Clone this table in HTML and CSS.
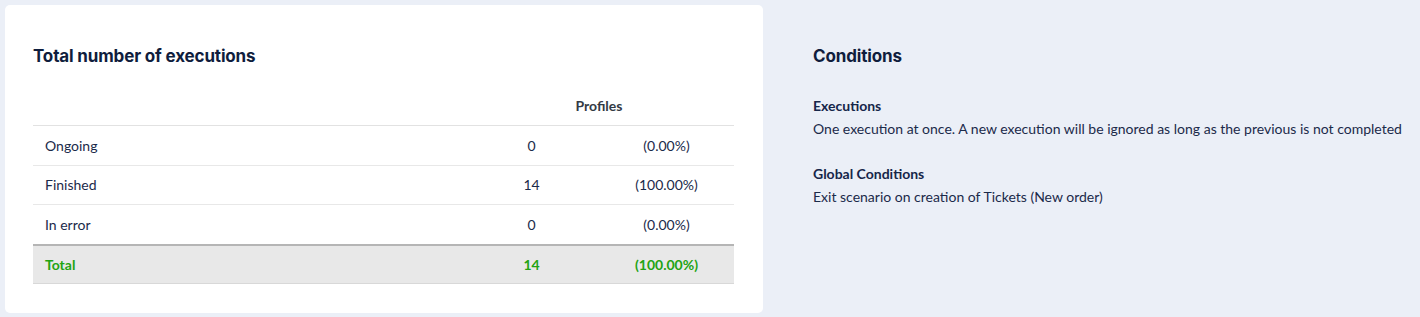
FILE: index.html
```html
<!DOCTYPE html>
<html>
<head>
<meta charset="utf-8">
<link rel="stylesheet" href="styles.css">
</head>
<body>
<div class="page">
  <section class="card">
    <h2 class="title">Total number of executions</h2>
    <table class="stats">
      <colgroup>
        <col class="c-label"><col class="c-num"><col class="c-pct">
      </colgroup>
      <thead>
        <tr><th></th><th colspan="2">Profiles</th></tr>
      </thead>
      <tbody>
        <tr><td class="label">Ongoing</td><td>0</td><td>(0.00%)</td></tr>
        <tr><td class="label">Finished</td><td>14</td><td>(100.00%)</td></tr>
        <tr><td class="label">In error</td><td>0</td><td>(0.00%)</td></tr>
        <tr class="total"><td class="label">Total</td><td>14</td><td>(100.00%)</td></tr>
      </tbody>
    </table>
  </section>
  <section class="conditions">
    <h2 class="title">Conditions</h2>
    <div class="cond">
      <h3 class="cond-title">Executions</h3>
      <p class="cond-text">One execution at once. A new execution will be ignored as long as the previous is not completed</p>
    </div>
    <div class="cond">
      <h3 class="cond-title">Global Conditions</h3>
      <p class="cond-text">Exit scenario on creation of Tickets (New order)</p>
    </div>
  </section>
</div>
</body>
</html>
```
FILE: styles.css
```css
html, body {
  margin: 0;
  padding: 0;
  background: #ebeff7;
}
body {
  font-family: "Lato", "Open Sans", sans-serif;
  color: #1b2a4a;
  font-size: 14px;
}
.page {
  display: flex;
  padding: 5px;
  gap: 50px;
  align-items: flex-start;
}
.card {
  background: #fff;
  border-radius: 5px;
  width: 702px;
  padding: 39px 28px 29px 28px;
  flex: none;
}
.title {
  margin: 0;
  font-family: "Inter", sans-serif;
  font-weight: 700;
  font-size: 17px;
  line-height: 24px;
  color: #0f1d3d;
  letter-spacing: -0.15px;
}
.stats {
  margin-top: 18px;
  width: 701px;
  border-collapse: collapse;
  table-layout: fixed;
}
.c-label { width: 431px; }
.c-num { width: 135px; }
.c-pct { width: 135px; }
.stats th {
  height: 39px;
  font-weight: 700;
  font-size: 14px;
  text-align: center;
  color: #333a45;
  padding: 0;
  border-bottom: 1px solid #e2e2e2;
}
.stats td {
  height: 38.5px;
  padding: 0;
  text-align: center;
  border-bottom: 1px solid #e8e8e8;
}
.stats td.label {
  text-align: left;
  padding-left: 12px;
}
.stats tr.total td {
  background: #e8e8e8;
  border-top: 2px solid #b5b5b5;
  border-bottom: 1px solid #d8d8d8;
  color: #22a312;
  font-weight: 700;
  height: 37px;
}
.conditions {
  padding-top: 39px;
}
.cond {
  margin-top: 27px;
}
.cond + .cond {
  margin-top: 22px;
}
.cond-title {
  margin: 0;
  font-size: 14px;
  font-weight: 700;
  line-height: 22px;
  color: #16264a;
}
.cond-text {
  margin: 0;
  line-height: 24px;
  font-size: 14px;
}
```
